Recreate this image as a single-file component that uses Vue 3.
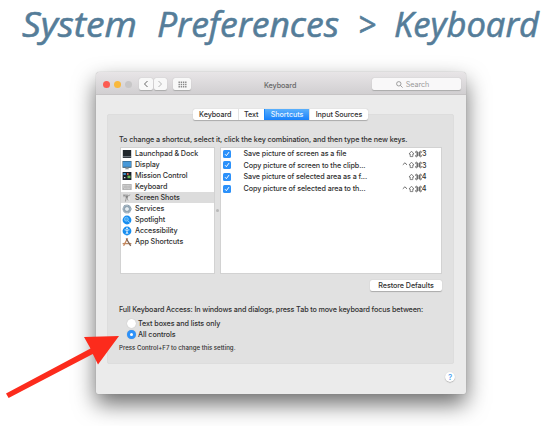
<script setup>
const tabs = ['Keyboard', 'Text', 'Shortcuts', 'Input Sources']
const categories = [
  ['launchpad', 'Launchpad & Dock'],
  ['display', 'Display'],
  ['mission', 'Mission Control'],
  ['keyboard', 'Keyboard'],
  ['shots', 'Screen Shots'],
  ['services', 'Services'],
  ['spotlight', 'Spotlight'],
  ['access', 'Accessibility'],
  ['apps', 'App Shortcuts'],
]
const shortcuts = [
  ['Save picture of screen as a file', false, '3'],
  ['Copy picture of screen to the clipb...', true, '3'],
  ['Save picture of selected area as a f...', false, '4'],
  ['Copy picture of selected area to th...', true, '4'],
]
</script>

<template>
  <main class="page">
    <svg class="heading" width="547" height="72" viewBox="0 0 547 72" role="heading">
      <text x="22" y="37" textLength="115" lengthAdjust="spacingAndGlyphs">System</text>
      <text x="157" y="37" textLength="182" lengthAdjust="spacingAndGlyphs">Preferences</text>
      <text x="358" y="37" textLength="18" lengthAdjust="spacingAndGlyphs">&gt;</text>
      <text x="394" y="37" textLength="145" lengthAdjust="spacingAndGlyphs">Keyboard</text>
    </svg>

    <section class="window">
      <header class="titlebar">
        <i class="light red"></i><i class="light amber"></i><i class="light grey"></i>
        <div class="nav">
          <span><svg width="6" height="8" viewBox="0 0 6 8"><path d="M4.5 1 1.5 4l3 3" fill="none" stroke="#666" stroke-width="1" /></svg></span>
          <span><svg width="6" height="8" viewBox="0 0 6 8"><path d="m1.5 1 3 3-3 3" fill="none" stroke="#b5b5b5" stroke-width="1" /></svg></span>
        </div>
        <div class="grid-button">
          <svg width="9" height="7" viewBox="0 0 9 7"><path d="M.5 1.2h8M.5 3.5h8M.5 5.8h8" stroke="#888" stroke-width="1.4" stroke-dasharray="1.4 .8" /></svg>
        </div>
        <span class="title">Keyboard</span>
        <div class="search">
          <svg width="7" height="7" viewBox="0 0 7 7" fill="none" stroke="#888" stroke-width=".8"><circle cx="2.8" cy="2.8" r="2.2" /><path d="m4.4 4.4 2.2 2.2" /></svg>
          <span>Search</span>
        </div>
      </header>

      <div class="body">
        <div class="panel">
          <nav class="tabs">
            <span v-for="t in tabs" :key="t" :class="{ active: t === 'Shortcuts' }">{{ t }}</span>
          </nav>
          <p class="intro">To change a shortcut, select it, click the key combination, and then type the new keys.</p>
          <div class="lists">
            <ul class="categories">
              <li v-for="[icon, name] in categories" :key="name" :class="{ selected: icon === 'shots' }">
                <svg width="10" height="10" viewBox="0 0 10 10">
                  <g v-if="icon === 'launchpad'"><path fill="#20262b" d="M.8 1h8.4v8H.8z" /><path fill="#687078" d="M1 7h8v1.3H1z" /></g>
                  <g v-else-if="icon === 'display'"><path fill="#32566e" d="M.5 1h9v6.8h-9z" /><path fill="#4798d8" d="M1 1.5h8v5.3H1z" /><path fill="#89949b" d="M4 7.5h2l1 1.7H3z" /></g>
                  <g v-else-if="icon === 'mission'"><path fill="#17202a" d="M.6 1h8.8v8H.6z" /><path fill="#3b91d2" d="M1.4 2h2.4v2H1.4z" /><path fill="#d65d45" d="M5 2h1.6v2H5z" /><path fill="#6dbb55" d="M5.5 4.6h3v2.6h-3z" /><path fill="#ddd" d="M2 6h1.4v1.3H2z" /></g>
                  <g v-else-if="icon === 'keyboard'"><rect x=".3" y="2" width="9.4" height="6" rx=".6" fill="#b4b4b4" /><path d="M1 3.5h8M1 5h8M2 6.6h6" stroke="#ddd" stroke-width=".7" stroke-dasharray="1 .3" /></g>
                  <g v-else-if="icon === 'shots'"><path fill="#bdbdbd" d="M1 1.2h5v3H1z" /><path d="M1.4 2.4h2M5 3.5 8.2 1.8M4.5 4 3.4 8.6M4.7 4.5l1.6 3" stroke="#888" stroke-width=".8" /><circle cx="4.8" cy="3.8" r="1.2" fill="#858585" /><path d="M7 4.5v3" stroke="#eee" /></g>
                  <g v-else-if="icon === 'services'" fill="none"><circle cx="5" cy="5" r="3.9" stroke="#7c91a2" stroke-width="1.2" stroke-dasharray="1 .35" /><circle cx="5" cy="5" r="2.7" stroke="#91a5b4" stroke-width="1.8" /><circle cx="5" cy="5" r="1.3" fill="#e4edf3" /></g>
                  <g v-else-if="icon === 'spotlight'"><circle cx="5" cy="5" r="4.4" fill="#168df0" /><circle cx="4.4" cy="4.2" r="2" fill="#42a7f5" stroke="#9bd3fc" stroke-width=".6" /><path d="m5.8 5.7 2 2" stroke="#b5dcf9" stroke-width=".8" /></g>
                  <g v-else-if="icon === 'access'"><circle cx="5" cy="5" r="4.4" fill="#168df0" /><circle cx="5" cy="2.4" r=".8" fill="#fff" /><path d="M2.6 3.8 5 4.2l2.4-.4M5 4v2L3.9 8.2M5 6l1.1 2.2" fill="none" stroke="#fff" stroke-width=".8" /></g>
                  <g v-else fill="none"><path d="M.6 6.6h8.8" stroke="#b98a65" stroke-width="1.3" /><path d="m5.6 1.2-4 7.6" stroke="#c98558" stroke-width="1.3" /><path d="m4.2 1.5 4.5 7.3" stroke="#7c6255" stroke-width="1.3" /></g>
                </svg>
                <span>{{ name }}</span>
              </li>
            </ul>
            <i class="splitter"></i>
            <ul class="shortcuts">
              <li v-for="[name, ctrl, key] in shortcuts" :key="name">
                <i class="check"><svg width="8" height="8" viewBox="0 0 8 8"><path d="m2 4.2 1.4 1.5L6 2.1" fill="none" stroke="#fff" stroke-width="1" /></svg></i>
                <span class="name">{{ name }}</span>
                <span class="keys">
                  <svg v-if="ctrl" width="6" height="8" viewBox="0 0 6 8"><path d="m.8 3.8 2.1-2 2.1 2" fill="none" stroke="#444" stroke-width=".8" /></svg>
                  <svg width="7" height="8" viewBox="0 0 7 8"><path d="M3.5 1.2 1 4h1.2v2.6h2.6V4H6z" fill="none" stroke="#555" stroke-width=".7" /></svg>
                  <svg width="7" height="8" viewBox="0 0 7 8"><path d="M2.4 3H1.7a.9.9 0 1 1 .7-.9v3.8a.9.9 0 1 1-.7-.9h3.6a.9.9 0 1 1-.7.9V2.1a.9.9 0 1 1 .7.9z" fill="none" stroke="#444" stroke-width=".75" /></svg>
                  <span>{{ key }}</span>
                </span>
              </li>
            </ul>
          </div>
          <button class="restore">Restore Defaults</button>
          <p class="access">Full Keyboard Access: In windows and dialogs, press Tab to move keyboard focus between:</p>
          <div class="radio"><i></i><span>Text boxes and lists only</span></div>
          <div class="radio on"><i></i><span>All controls</span></div>
          <p class="hint">Press Control+F7 to change this setting.</p>
        </div>
        <div class="help">?</div>
      </div>
    </section>

    <svg class="arrow" width="113" height="64" viewBox="0 0 113 64">
      <path d="M0 57.4 84.5 12.6 78 1l35-1-21 28.5-5.2-10.6L2.6 62z" fill="#fc2b1c" />
    </svg>
  </main>
</template>

<style>
body { margin: 0; }
</style>

<style scoped>
* { box-sizing: border-box; }
.page { position: relative; width: 547px; height: 426px; overflow: hidden; background: #fff; font-family: Inter, "Liberation Sans", sans-serif; font-size: 7.2px; font-weight: 500; letter-spacing: -.08px; line-height: 11px; color: #303030; white-space: nowrap; }
.heading { display: block; font: italic 35px "Open Sans", cursive; letter-spacing: 0; fill: #557d99; stroke: #557d99; stroke-width: .6; stroke-linejoin: round; }
p, ul { margin: 0; padding: 0; list-style: none; }
svg { flex: none; }
.window { width: 370px; height: 322px; margin-left: 96px; border-radius: 4px 4px 2px 2px; background: #ebebeb; box-shadow: 0 0 1px #888, 0 10px 22px rgba(0,0,0,.58); }
.titlebar { display: flex; align-items: center; height: 23px; padding: 2px 5px 0 7px; border-radius: 4px 4px 0 0; border-bottom: 1px solid #c6c4c5; background: linear-gradient(#e8e5e7, #d1cfd1); }
.light { flex: none; width: 7px; height: 7px; margin-right: 4px; border-radius: 50%; }
.red { background: #fc5b51; }
.amber { background: #f9b93d; }
.grey { background: #c7c6c7; }
.nav { display: flex; gap: 1px; margin-left: 3px; }
.nav span, .grid-button { display: flex; align-items: center; justify-content: center; width: 13.5px; height: 12px; border-radius: 2px; background: #f8f8f8; box-shadow: 0 .5px 1px #aaa; }
.grid-button { width: 18px; margin-left: 6px; }
.title { width: 34px; margin-left: 73px; padding-top: 2px; color: #666; }
.search { display: flex; align-items: center; justify-content: center; gap: 3px; width: 89px; height: 12px; margin-left: auto; padding-right: 8px; border-radius: 2px; background: #f9f8f9; box-shadow: 0 .5px 1px #aaa; color: #999; font-weight: 400; }
.body { padding: 19px 12px 0 11px; }
.panel { height: 250px; padding: 0 11px 0 12px; border: 1px solid #dddddd; border-radius: 2px; background: #e1e1e1; }
.tabs { display: grid; grid-template-columns: 44.5px 26.5px 45px 59px; width: 175px; height: 11px; margin: -6px 0 0 73px; border-radius: 2px; background: #fff; box-shadow: 0 .5px 1px #aaa; text-align: center; }
.tabs span + span { border-left: 1px solid #e3e3e3; }
.tabs span.active { color: #e7f4ff; background: linear-gradient(#5bb0fb, #1881fb); border-color: #1a87fb; }
.intro { margin-top: 14px; margin-left: -1px; }
.lists { display: flex; height: 127px; margin-top: 2px; }
.categories { width: 95px; border: 1px solid #d2d2d2; background: #fff; }
.categories li { display: flex; align-items: center; gap: 3px; height: 11px; padding-left: 1px; }
.categories .selected { background: #dcdcdc; }
.splitter { align-self: center; width: 3px; height: 3px; margin: 0 1px; border-radius: 50%; background: #b8b8b8; }
.shortcuts { flex: 1; padding: 0 6px 0 2px; border: 1px solid #d2d2d2; background: #fff; }
.shortcuts li { display: flex; align-items: center; height: 11.6px; }
.check { display: flex; width: 8px; height: 8px; border-radius: 1.5px; background: #2c91fa; }
.name { margin-left: 12.5px; }
.keys { display: flex; align-items: center; margin-left: auto; padding-right: 8.5px; }
.restore { display: block; width: 72px; height: 11px; margin: 6px 0 0 auto; padding: 0; border: 0; border-radius: 2px; background: #fff; box-shadow: 0 .5px 1px #aaa; font: inherit; letter-spacing: inherit; color: #303030; }
.access { margin: 13px 0 0 -1px; letter-spacing: -.12px; }
.radio { display: flex; align-items: center; gap: 2px; height: 11px; margin-left: 7px; }
.access + .radio { margin-top: 3px; }
.radio i { width: 9px; height: 9px; border-radius: 50%; background: #fff; box-shadow: 0 0 1px #aaa; }
.radio.on i { border: 3px solid #2c91fa; }
.hint { margin: 2px 0 0 -1px; font-size: 6.1px; letter-spacing: 0; }
.help { width: 10px; height: 10px; margin: 8px -1px 0 auto; border-radius: 50%; background: #fff; box-shadow: 0 .5px 1px #999; color: #4a9ff0; font-size: 8px; line-height: 10px; text-align: center; }
.arrow { position: absolute; left: 6px; top: 336px; }
</style>
